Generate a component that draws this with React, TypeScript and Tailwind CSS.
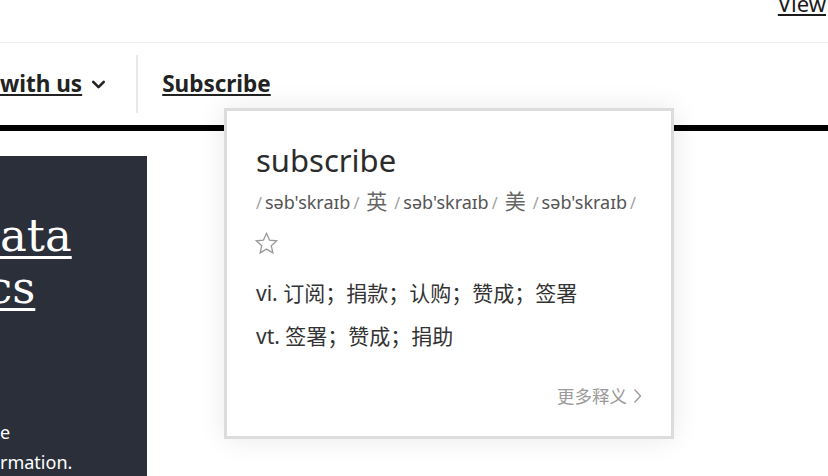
import { ChevronDown } from "lucide-react";

function StarOutline() {
  return (
    <svg width="25" height="25" viewBox="0 0 24 24" fill="none">
      <polygon
        points="12,2.2 14.9,8.7 21.8,9.4 16.6,14.1 18.1,21 12,17.4 5.9,21 7.4,14.1 2.2,9.4 9.1,8.7"
        stroke="#9a9a9a"
        strokeWidth="1.25"
        strokeLinejoin="miter"
      />
    </svg>
  );
}

function Slash() {
  return <span className="mx-[3px] text-[16px] text-[#a0a0a0]">/</span>;
}

function DictionaryCard() {
  return (
    <div className="absolute left-[224px] top-[108px] flex h-[331px] w-[450px] flex-col border-[3px] border-[#dcdcdc] bg-white pl-[29px] pr-[29px] pt-[29px] shadow-[0_0_26px_rgba(0,0,0,0.09)]">
      <div className="text-[31px] leading-[40px] text-[#2b2b2b]">subscribe</div>
      <div className="mt-[8px] flex items-baseline text-[18px] leading-[26px] text-[#555]">
        <span className="-ml-[3px]">
          <Slash />
        </span>
        <span>səb'skraɪb</span>
        <Slash />
        <span className="mx-[4px] text-[21px] text-[#666]">英</span>
        <Slash />
        <span>səb'skraɪb</span>
        <Slash />
        <span className="mx-[4px] text-[21px] text-[#666]">美</span>
        <Slash />
        <span>səb'skraɪb</span>
        <Slash />
      </div>
      <div className="mt-[15px] -ml-[2px] h-[25px]">
        <StarOutline />
      </div>
      <div className="mt-[22px] text-[21px] leading-[30px] text-[#333]">vi. 订阅；捐款；认购；赞成；签署</div>
      <div className="mt-[13px] text-[21px] leading-[30px] text-[#333]">vt. 签署；赞成；捐助</div>
      <div className="mt-[33px] flex items-center justify-end text-[17.5px] leading-[24px] text-[#9a9a9a]">
        <span>更多释义</span>
        <svg className="ml-[6px]" width="9" height="16" viewBox="0 0 9 16" fill="none">
          <path d="M1.5 1.5 L7.5 8 L1.5 14.5" stroke="#9a9a9a" strokeWidth="1.3" />
        </svg>
      </div>
    </div>
  );
}

export default function App() {
  return (
    <div className="relative h-[476px] w-[828px] overflow-hidden bg-white font-['Noto_Sans','Noto_Sans_CJK_SC',sans-serif] text-[#222]">
      {/* utility strip */}
      <div className="flex h-[43px] items-start justify-end border-b border-[#ececec]">
        <a className="-mt-[12px] mr-[2px] text-[22px] leading-[30px] text-[#1a1a1a] underline decoration-[2px] underline-offset-[2px]">
          View
        </a>
      </div>

      {/* main navigation */}
      <nav className="flex h-[82px] items-center">
        <a className="text-[22.5px] font-bold leading-[30px] text-[#222] underline decoration-[2px] underline-offset-[2px]">
          with us
        </a>
        <ChevronDown className="ml-[6px] text-[#222]" size={21} strokeWidth={3} />
        <div className="ml-[27px] h-[58px] w-[2px] bg-[#e8e8e8]" />
        <a className="ml-[24px] text-[22.5px] font-bold leading-[30px] text-[#222] underline decoration-[2px] underline-offset-[2px]">
          Subscribe
        </a>
      </nav>
      <div className="h-[6px] bg-black" />

      {/* content */}
      <div className="mt-[25px] flex">
        <div className="flex h-[320px] w-[147px] flex-col overflow-hidden bg-[#2a2f3a] pt-[54px] text-white">
          <div className="font-['DejaVu_Serif',serif] text-[45px] leading-[52px]">
            <div>
              <span className="underline decoration-[3px] underline-offset-[5px]">ata</span>
            </div>
            <div className="-ml-[13px]">
              <span className="underline decoration-[3px] underline-offset-[5px]">cs</span>
            </div>
          </div>
          <div className="mt-[103px] text-[18px] leading-[30px]">
            <div>e</div>
            <div>rmation.</div>
          </div>
        </div>
      </div>

      <DictionaryCard />
    </div>
  );
}
